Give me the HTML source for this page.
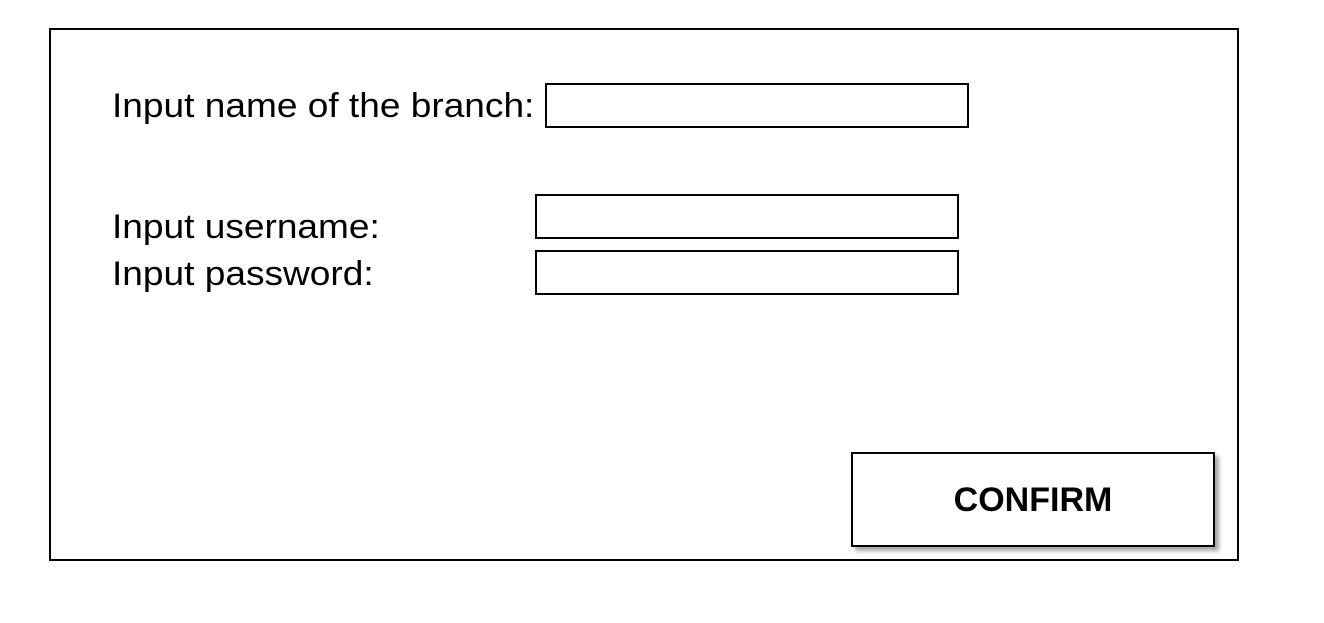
<!DOCTYPE html>
<html><head><style>
body{margin:0;width:1324px;height:623px;background:#fff;position:relative;font-family:"Liberation Sans",sans-serif;overflow:hidden}
.box{position:absolute;border:2px solid #000;box-sizing:border-box}
.t{position:absolute;font-size:34px;line-height:40px;color:#000;white-space:nowrap;transform:scaleX(1.09);transform-origin:left center}
</style></head><body>
<div class="box" style="left:49px;top:28px;width:1190px;height:533px"></div>
<div class="t" style="left:112px;top:86px">Input name of the branch:</div>
<div class="box" style="left:545px;top:83px;width:424px;height:45px"></div>
<div class="t" style="left:112px;top:207px">Input username:</div>
<div class="t" style="left:112px;top:254px">Input password:</div>
<div class="box" style="left:535px;top:194px;width:424px;height:45px"></div>
<div class="box" style="left:535px;top:250px;width:424px;height:45px"></div>
<div class="box" style="left:851px;top:452px;width:364px;height:95px;box-shadow:4px 4px 4px rgba(0,0,0,0.35);background:#fff"></div>
<div class="t" style="left:851px;top:480px;width:364px;text-align:center;font-weight:bold;transform:none">CONFIRM</div>
</body></html>
